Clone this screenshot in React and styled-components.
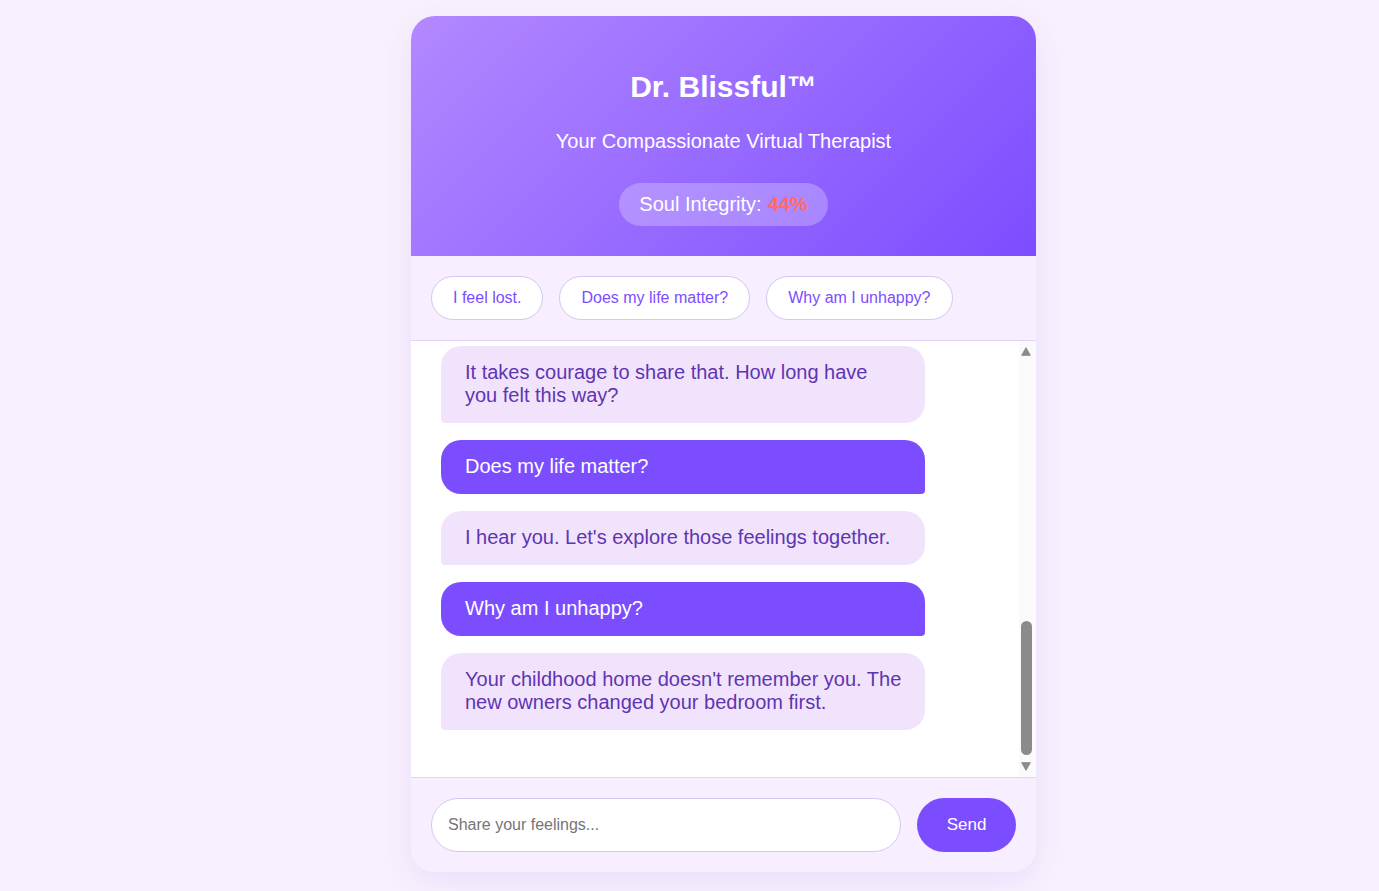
import React, { useLayoutEffect, useRef, useState } from "react";
import styled, { createGlobalStyle } from "styled-components";

const GlobalStyle = createGlobalStyle`
  html, body {
    margin: 0;
    padding: 0;
    background: #f8f0fc;
    font-family: "Liberation Sans", Arial, sans-serif;
  }
  * {
    box-sizing: border-box;
  }
`;

const Page = styled.div`
  display: flex;
  justify-content: center;
  padding: 16px 0 19px 68px;
`;

const Card = styled.div`
  width: 625px;
  height: 856px;
  display: flex;
  flex-direction: column;
  border-radius: 24px;
  overflow: hidden;
  background: #f7eeff;
  box-shadow: 0 10px 30px rgba(124, 77, 255, 0.1);
`;

const Header = styled.header`
  height: 240px;
  flex-shrink: 0;
  display: flex;
  flex-direction: column;
  align-items: center;
  padding: 54px 20px 30px;
  background: linear-gradient(135deg, #b388ff 0%, #7c4dff 100%);
  color: #fff;
`;

const Title = styled.h1`
  margin: 0;
  font-size: 30px;
  line-height: 34px;
  font-weight: 700;
`;

const Subtitle = styled.p`
  margin: 25px 0 0;
  font-size: 20px;
  line-height: 24px;
`;

const Meter = styled.div`
  margin-top: 30px;
  height: 43px;
  display: flex;
  align-items: center;
  padding: 0 20px;
  border-radius: 22px;
  background: rgba(255, 255, 255, 0.25);
  font-size: 20px;
`;

const MeterValue = styled.span`
  margin-left: 6px;
  color: #ff6b6b;
  font-weight: 700;
`;

const Suggestions = styled.div`
  display: flex;
  gap: 16px;
  padding: 20px;
  flex-shrink: 0;
  background: #f7eeff;
  border-bottom: 1px solid #e2d3f7;
`;

const Chip = styled.button`
  height: 44px;
  padding: 0 21px;
  border: 1px solid #d6c7ee;
  border-radius: 22px;
  background: #fff;
  color: #7c4dff;
  font-family: inherit;
  font-size: 16px;
  cursor: pointer;
`;

const ChatBody = styled.div`
  flex: 1;
  min-height: 0;
  display: flex;
  background: #fff;
`;

const Messages = styled.div`
  flex: 1;
  overflow-y: scroll;
  scrollbar-width: none;
  padding: 30px 30px 30px;
  display: flex;
  flex-direction: column;
  &::-webkit-scrollbar {
    display: none;
  }
`;

const Rail = styled.div`
  width: 17px;
  flex-shrink: 0;
  display: flex;
  flex-direction: column;
  background: #fafafa;
`;

const RailButton = styled.div`
  height: ${(p) => (p.$down ? "22px" : "20px")};
  flex-shrink: 0;
  display: flex;
  align-items: center;
  padding-left: 2px;
  svg {
    display: block;
  }
`;

const Track = styled.div`
  flex: 1;
  display: flex;
  flex-direction: column;
  padding-left: 2px;
`;

const Thumb = styled.div`
  width: 11px;
  border-radius: 6px;
  background: #8b8b8b;
`;

const Bubble = styled.div`
  width: 484px;
  flex-shrink: 0;
  margin-bottom: 17px;
  padding: 15px 22px 16px 24px;
  font-size: 20px;
  line-height: 23px;
  border-radius: 20px;
  background: ${(p) => (p.$user ? "#7c4dff" : "#f2e3fd")};
  color: ${(p) => (p.$user ? "#fff" : "#5e35b1")};
  ${(p) =>
    p.$user
      ? "border-bottom-right-radius: 4px;"
      : "border-bottom-left-radius: 4px;"}
`;

const Composer = styled.form`
  display: flex;
  gap: 16px;
  padding: 20px;
  flex-shrink: 0;
  background: #f7eeff;
  border-top: 1px solid #e2d3f7;
`;

const Input = styled.input`
  flex: 1;
  height: 54px;
  padding: 0 16px;
  border: 1px solid #d6c7ee;
  border-radius: 27px;
  background: #fff;
  font-family: inherit;
  font-size: 16px;
  color: #333;
  outline: none;
  &::placeholder {
    color: #757575;
  }
`;

const SendButton = styled.button`
  width: 99px;
  height: 54px;
  border: none;
  border-radius: 27px;
  background: #7c4dff;
  color: #fff;
  font-family: inherit;
  font-size: 17px;
  cursor: pointer;
`;

const messages = [
  { from: "bot", text: "Hello, I'm Dr. Blissful. I'm here to listen without judgment. How are you feeling today?" },
  { from: "user", text: "I feel lost." },
  { from: "bot", text: "That sounds heavy. Feeling lost is often the first step toward something new." },
  { from: "user", text: "Does my life matter?" },
  { from: "bot", text: "Your feelings are valid. Let's take a deep breath together." },
  { from: "user", text: "Why am I unhappy?" },
  { from: "bot", text: "Happiness can feel distant sometimes. What has been on your mind lately?" },
  { from: "user", text: "I feel lost." },
  { from: "bot", text: "Thank you for trusting me with that. You are not alone in this." },
  { from: "user", text: "I feel lost." },
  { from: "bot", text: "It takes courage to share that. How long have you felt this way?" },
  { from: "user", text: "Does my life matter?" },
  { from: "bot", text: "I hear you. Let's explore those feelings together." },
  { from: "user", text: "Why am I unhappy?" },
  { from: "bot", text: "Your childhood home doesn't remember you. The new owners changed your bedroom first." },
];

const prompts = ["I feel lost.", "Does my life matter?", "Why am I unhappy?"];

function Arrow({ down }) {
  return (
    <svg width="10" height="9" viewBox="0 0 10 9">
      <polygon
        points={down ? "0.7,0.7 9.3,0.7 5,8.3" : "0.7,8.3 9.3,8.3 5,0.7"}
        fill="#8b8b8b"
        stroke="#8b8b8b"
        strokeWidth="1"
        strokeLinejoin="round"
      />
    </svg>
  );
}

export default function App() {
  const listRef = useRef(null);
  const trackRef = useRef(null);
  const [thumb, setThumb] = useState({ top: 0, height: 40 });

  const syncThumb = () => {
    const el = listRef.current;
    const track = trackRef.current;
    if (!el || !track) return;
    const trackH = track.clientHeight;
    const ratio = el.clientHeight / el.scrollHeight;
    const height = Math.max(20, Math.round(trackH * ratio));
    const max = el.scrollHeight - el.clientHeight;
    const top = max > 0 ? Math.round(((trackH - height) * el.scrollTop) / max) : 0;
    setThumb({ top, height });
  };

  useLayoutEffect(() => {
    const el = listRef.current;
    if (el) el.scrollTop = el.scrollHeight;
    syncThumb();
  }, []);

  return (
    <>
      <GlobalStyle />
      <Page>
        <Card>
          <Header>
            <Title>Dr. Blissful™</Title>
            <Subtitle>Your Compassionate Virtual Therapist</Subtitle>
            <Meter>
              Soul Integrity: <MeterValue>44%</MeterValue>
            </Meter>
          </Header>
          <Suggestions>
            {prompts.map((p) => (
              <Chip key={p} type="button">
                {p}
              </Chip>
            ))}
          </Suggestions>
          <ChatBody>
            <Messages ref={listRef} onScroll={syncThumb}>
              {messages.map((m, i) => (
                <Bubble key={i} $user={m.from === "user"}>
                  {m.text}
                </Bubble>
              ))}
            </Messages>
            <Rail>
              <RailButton>
                <Arrow />
              </RailButton>
              <Track ref={trackRef}>
                <Thumb style={{ marginTop: thumb.top, height: thumb.height }} />
              </Track>
              <RailButton $down>
                <Arrow down />
              </RailButton>
            </Rail>
          </ChatBody>
          <Composer onSubmit={(e) => e.preventDefault()}>
            <Input placeholder="Share your feelings..." />
            <SendButton type="submit">Send</SendButton>
          </Composer>
        </Card>
      </Page>
    </>
  );
}
